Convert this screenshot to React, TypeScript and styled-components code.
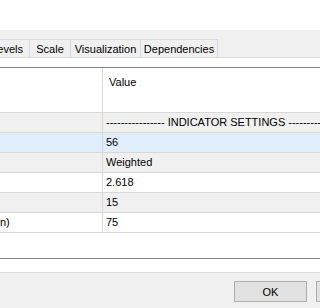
import * as React from 'react';
import styled, { createGlobalStyle } from 'styled-components';

const GlobalStyle = createGlobalStyle`
  html, body {
    margin: 0;
    padding: 0;
    background: #ffffff;
  }
  body {
    font-family: 'Liberation Sans', Arial, sans-serif;
    font-size: 11px;
    color: #000000;
  }
`;

type Row = { name: string; value: string; tone: 'gray' | 'blue' | 'white' };

const rows: Row[] = [
  { name: '', value: '---------------- INDICATOR SETTINGS ------------', tone: 'gray' },
  { name: '', value: '56', tone: 'blue' },
  { name: '', value: 'Weighted', tone: 'gray' },
  { name: '', value: '2.618', tone: 'white' },
  { name: '', value: '15', tone: 'gray' },
  { name: 'n)', value: '75', tone: 'white' },
];

// tab widths as measured, first one is scrolled out on the left
const tabs = [
  { label: 'evels', width: 30 },
  { label: 'Scale', width: 42 },
  { label: 'Visualization', width: 71 },
  { label: 'Dependencies', width: 78 },
];

export default function App() {
  return (
    <Window>
      <GlobalStyle />
      <TitleBar />
      <TabStrip>
        {tabs.map((tab, i) => (
          <Tab key={tab.label} first={i === 0} style={{ width: tab.width }}>
            {tab.label}
          </Tab>
        ))}
      </TabStrip>
      <TabPage>
        <Grid>
          <HeaderCell />
          <HeaderCell value>Value</HeaderCell>
          {rows.map((row, i) => (
            <React.Fragment key={i}>
              <NameCell tone={row.tone}>{row.name}</NameCell>
              <ValueCell tone={row.tone}>{row.value}</ValueCell>
            </React.Fragment>
          ))}
          <Filler />
        </Grid>
      </TabPage>
      <Footer>
        <Button>OK</Button>
        <Button>Cancel</Button>
      </Footer>
    </Window>
  );
}

const toneColor = {
  gray: '#f0f0f0',
  blue: '#e0eefa',
  white: '#ffffff',
};

const Window = styled.div`
  width: 320px;
  height: 308px;
  overflow: hidden;
  background: #f0f0f0;
  display: flex;
  flex-direction: column;
`;

const TitleBar = styled.div`
  height: 30px;
  flex-shrink: 0;
  background: #ffffff;
`;

const TabStrip = styled.div`
  display: flex;
  height: 18px;
  margin-top: 9px;
  border-bottom: 1px solid #d9d9d9;
  flex-shrink: 0;
`;

const Tab = styled.div<{ first?: boolean }>`
  box-sizing: border-box;
  flex-shrink: 0;
  height: 18px;
  display: flex;
  align-items: center;
  justify-content: ${({ first }) => (first ? 'flex-end' : 'center')};
  padding-right: ${({ first }) => (first ? '6px' : '0')};
  border: 1px solid #d9d9d9;
  border-left: ${({ first }) => (first ? 'none' : '1px solid #d9d9d9')};
  border-bottom: none;
  margin-left: ${({ first }) => (first ? '0' : '-1px')};
  background: #f0f0f0;
  white-space: nowrap;
`;

const TabPage = styled.div`
  background: #ffffff;
  padding-top: 9px;
  height: 205px;
  border-bottom: 1px solid #dcdcdc;
  flex-shrink: 0;
`;

const Grid = styled.div`
  display: grid;
  grid-template-columns: 103px 1fr;
  grid-auto-rows: 20px;
  grid-template-rows: 45px;
  border-top: 1px solid #828282;
  border-bottom: 1px solid #828282;
  height: 190px;
  overflow: hidden;
`;

const HeaderCell = styled.div<{ value?: boolean }>`
  box-sizing: border-box;
  background: #ffffff;
  border-bottom: 1px solid #d8d8d8;
  border-right: ${({ value }) => (value ? 'none' : '1px solid #d8d8d8')};
  padding: 8px 0 0 6px;
`;

const NameCell = styled.div<{ tone: Row['tone'] }>`
  box-sizing: border-box;
  background: ${({ tone }) => toneColor[tone]};
  border-bottom: 1px solid #d8d8d8;
  border-right: 1px solid #d8d8d8;
  padding: 3px 0 0 0;
  white-space: nowrap;
  overflow: hidden;
`;

const ValueCell = styled.div<{ tone: Row['tone'] }>`
  box-sizing: border-box;
  background: ${({ tone }) => toneColor[tone]};
  border-bottom: 1px solid #d8d8d8;
  padding: 3px 0 0 3px;
  white-space: nowrap;
  overflow: hidden;
`;

const Filler = styled.div`
  grid-column: 1 / 3;
  background: #ffffff;
`;

const Footer = styled.div`
  display: flex;
  gap: 9px;
  padding: 8px 0 0 234px;
`;

const Button = styled.div`
  box-sizing: border-box;
  flex-shrink: 0;
  width: 73px;
  height: 21px;
  background: #e1e1e1;
  border: 1px solid #adadad;
  display: flex;
  align-items: center;
  justify-content: center;
`;
